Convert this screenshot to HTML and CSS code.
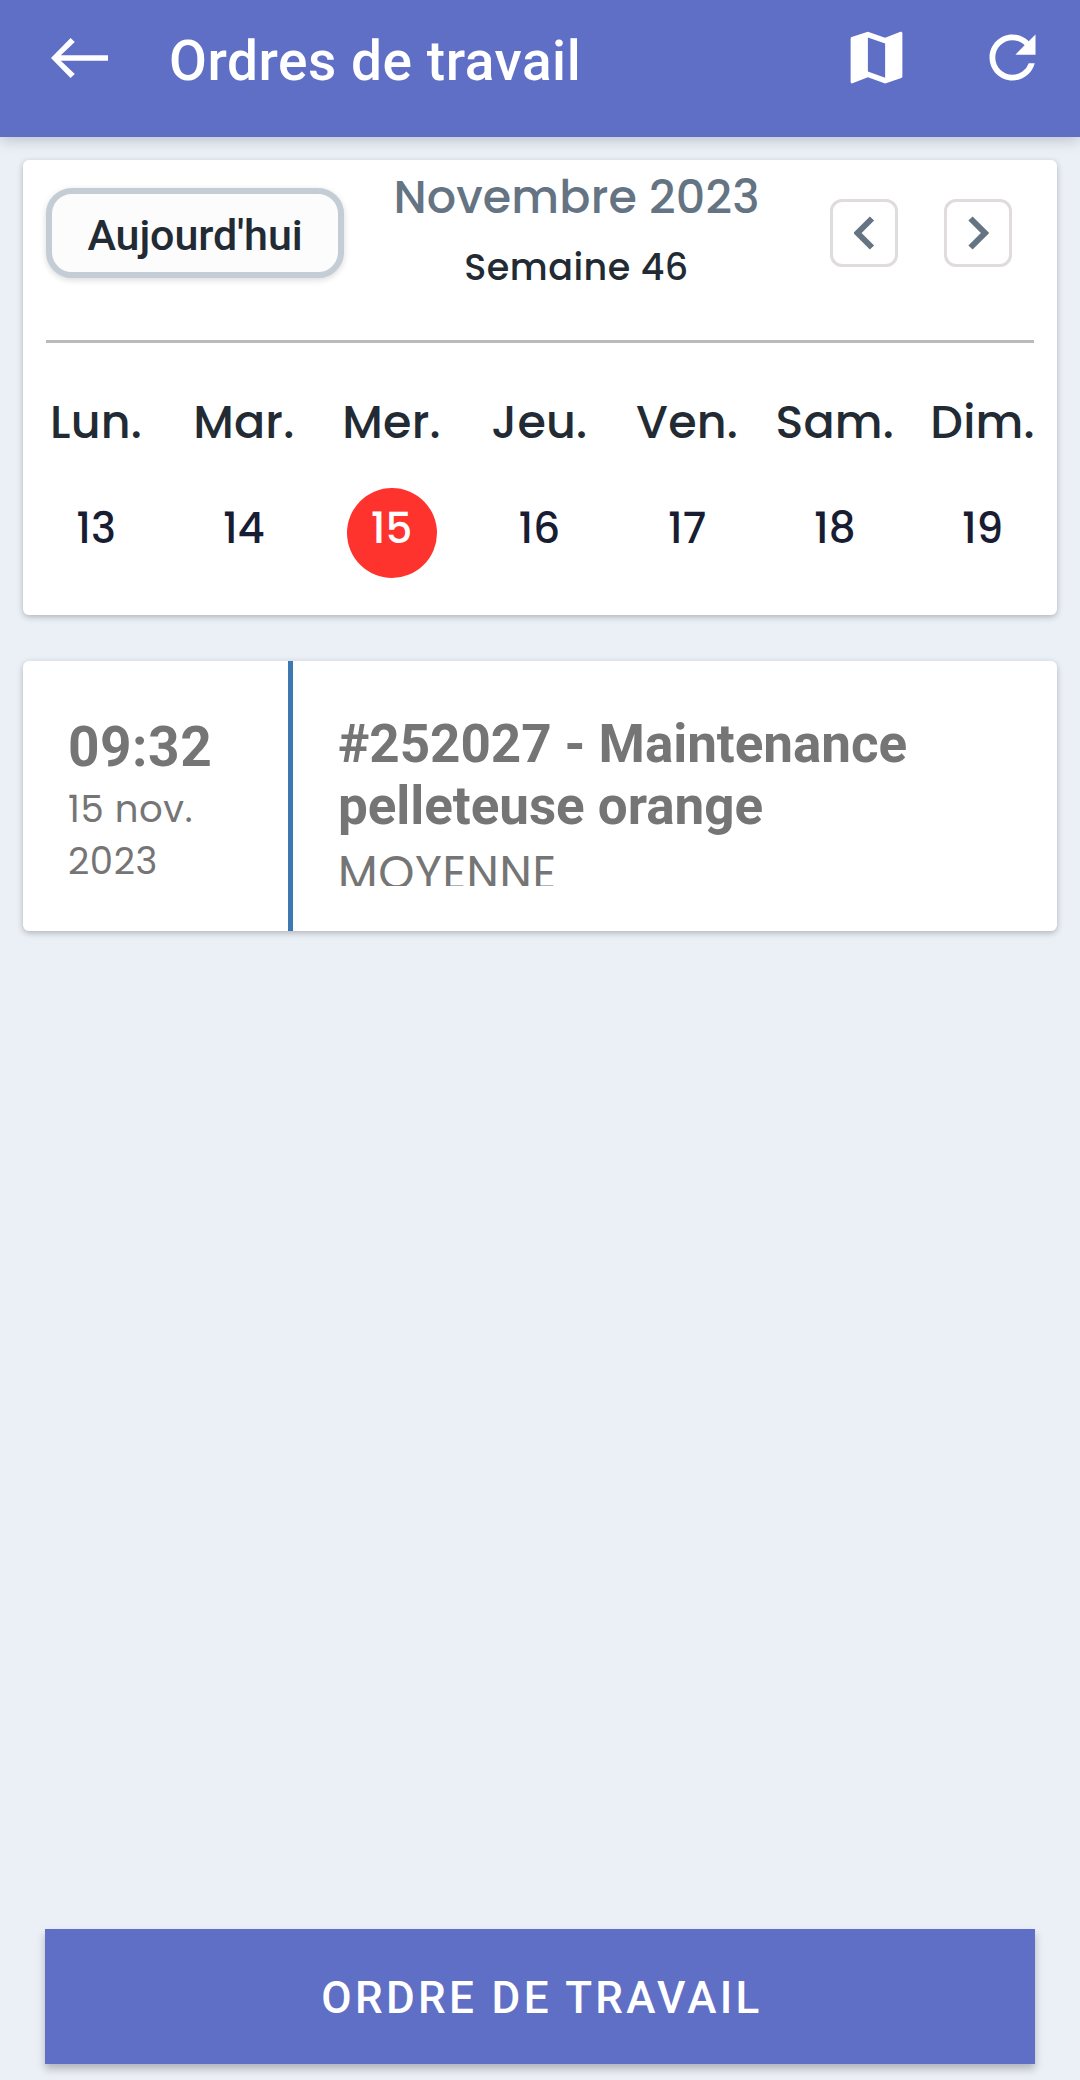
FILE: index.html
```html
<!DOCTYPE html>
<html lang="fr">
<head>
<meta charset="utf-8">
<title>Ordres de travail</title>
<link rel="stylesheet" href="styles.css">
</head>
<body>
<header class="appbar">
  <svg class="back" viewBox="0 0 57 40"><path d="M57 17.3H9.8L23.8 4 19.6 0 0 20l19.6 20 4.2-4L9.8 22.8H57z"/></svg>
  <h1 class="appbar-title">Ordres de travail</h1>
  <svg class="icon" viewBox="0 0 24 24"><path d="M20.5 3l-.16.03L15 5.1 9 3 3.36 4.9c-.21.07-.36.25-.36.48V20.5c0 .28.22.5.5.5l.16-.03L9 18.9l6 2.1 5.64-1.9c.21-.07.36-.25.36-.48V3.5c0-.28-.22-.5-.5-.5zM15 19l-6-2.11V5l6 2.11V19z"/></svg>
  <svg class="icon" viewBox="0 0 24 24"><path d="M17.65 6.35A7.958 7.958 0 0 0 12 4c-4.42 0-7.99 3.58-7.99 8s3.57 8 7.99 8c3.73 0 6.84-2.55 7.73-6h-2.08A5.99 5.99 0 0 1 12 18c-3.31 0-6-2.69-6-6s2.69-6 6-6c1.66 0 3.14.69 4.22 1.78L13 11h7V4l-2.35 2.35z"/></svg>
</header>
<main class="content">
  <section class="card calendar">
    <div class="toolbar">
      <button class="today">Aujourd'hui</button>
      <div class="period">
        <div class="month">Novembre 2023</div>
        <div class="week">Semaine 46</div>
      </div>
      <button class="nav" aria-label="Semaine précédente"><svg viewBox="0 0 21 34"><path d="M18 2.500L3.500 17 18 31.500"/></svg></button>
      <button class="nav" aria-label="Semaine suivante"><svg viewBox="0 0 21 34"><path d="M2.500 2.500L17 17 2.500 31.500"/></svg></button>
    </div>
    <div class="days">
      <div class="day"><span class="name">Lun.</span><span class="num">13</span></div>
      <div class="day"><span class="name">Mar.</span><span class="num">14</span></div>
      <div class="day"><span class="name">Mer.</span><span class="num current">15</span></div>
      <div class="day"><span class="name">Jeu.</span><span class="num">16</span></div>
      <div class="day"><span class="name">Ven.</span><span class="num">17</span></div>
      <div class="day"><span class="name">Sam.</span><span class="num">18</span></div>
      <div class="day"><span class="name">Dim.</span><span class="num">19</span></div>
    </div>
  </section>
  <article class="card order">
    <div class="when">
      <div class="time">09:32</div>
      <div class="date">15 nov. 2023</div>
    </div>
    <div class="detail">
      <h2 class="order-title">#252027 - Maintenance pelleteuse orange</h2>
      <div class="priority">MOYENNE</div>
    </div>
  </article>
</main>
<footer class="actions"><button class="create">ORDRE DE TRAVAIL</button></footer>
</body>
</html>
```
FILE: styles.css
```css
* { box-sizing: border-box; margin: 0; }
body {
  width: 1080px;
  height: 2080px;
  display: flex;
  flex-direction: column;
  background: #ebf0f7;
  font-family: Roboto, sans-serif;
  overflow: hidden;
}
button { font: inherit; padding: 0; }
.appbar {
  height: 137px;
  display: flex;
  align-items: flex-start;
  padding: 22px 33.5px 0 51px;
  background: #5f6fc6;
  box-shadow: 0 3px 14px rgba(0, 0, 0, .2);
  fill: #fff;
  color: #fff;
}
.back { width: 57px; height: 40px; margin-top: 16px; }
.appbar-title { flex: 1; margin-left: 61px; font-size: 55px; font-weight: 500; letter-spacing: .55px; line-height: 78px; white-space: nowrap; }
.icon { width: 69px; height: 69px; margin-top: .5px; }
.icon + .icon { margin-left: 67px; }
.content { flex: 1; padding: 23px; }
.card { background: #fff; border-radius: 6px; box-shadow: 0 2px 6px rgba(0, 0, 0, .25); }
.calendar { height: 455px; padding: 0 23px; font-family: Poppins, Inter, sans-serif; font-weight: 500; }
.toolbar { height: 183px; display: flex; align-items: flex-start; border-bottom: 3px solid #bbb; padding-right: 22px; }
.today {
  width: 298px; height: 90px; margin-top: 28px; padding-top: 3px;
  border: 6px solid #c4ccd5; border-radius: 26px;
  background: #fcfcfc; box-shadow: 0 2px 6px rgba(0, 0, 0, .15);
  font-family: Roboto, sans-serif; font-size: 43px; letter-spacing: -.1px; color: #222b34;
}
.period { flex: 1; margin-right: 21px; text-align: center; color: #657483; white-space: nowrap; }
.month { margin-top: 7px; font-size: 46px; letter-spacing: .15px; line-height: 60px; }
.week { margin-top: 13px; font-size: 36.5px; letter-spacing: .5px; line-height: 56px; color: #222b34; }
.nav { width: 68px; height: 68px; margin-top: 39px; border: 3px solid #e0dbdc; border-radius: 12px; background: #fff; display: flex; align-items: center; justify-content: center; }
.nav + .nav { margin-left: 46px; }
.nav svg { width: 21px; height: 34px; fill: none; stroke: #657483; stroke-width: 6; }
.days { display: grid; grid-template-columns: repeat(7, 147.75px); margin: 0 -23.8px; }
.day { display: flex; flex-direction: column; align-items: center; }
.name { margin-top: 49px; font-size: 46px; letter-spacing: .2px; line-height: 60px; color: #222b34; }
.num { width: 90px; height: 90px; margin-top: 36px; text-align: center; font-size: 42px; line-height: 81px; color: #181d33; border-radius: 50%; }
.current { background: #ff332e; color: #fff; }
.order { height: 270px; margin-top: 46px; display: flex; color: #757575; }
.when { width: 265px; padding: 54px 40px 0 45px; }
.time { font-size: 55px; font-weight: 700; letter-spacing: .5px; line-height: 64px; }
.date { margin-top: 4px; font-family: Poppins, Inter, sans-serif; font-size: 37px; letter-spacing: .6px; line-height: 52px; }
.detail { flex: 1; border-left: 5px solid #3d79b0; padding: 52px 46px 0 45px; }
.order-title { font-size: 53px; font-weight: 700; letter-spacing: -.05px; line-height: 62px; }
.priority { height: 49px; overflow: hidden; font-family: Poppins, Inter, sans-serif; font-size: 46px; letter-spacing: .6px; line-height: 73px; }
.actions { height: 151px; padding: 0 45px; }
.create { width: 990px; height: 135px; padding: 3px 0 0 4px; border: 0; background: #5f6fc6; color: #fff; font-size: 44px; font-weight: 500; letter-spacing: 3.35px; box-shadow: 0 5px 8px rgba(0, 0, 0, .25); }
```
